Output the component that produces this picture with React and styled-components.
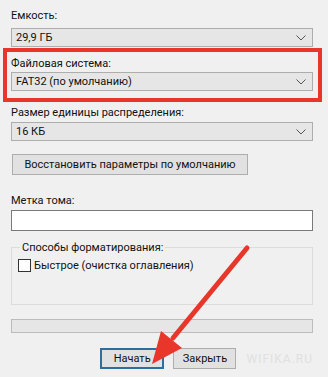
import React from "react";
import styled, { createGlobalStyle } from "styled-components";

const GlobalStyle = createGlobalStyle`
  html, body {
    margin: 0;
    padding: 0;
    background: #f0f0f0;
  }
  body {
    font-family: Roboto, "Noto Sans", sans-serif;
    font-size: 11px;
    color: #111;
  }
`;

const Dialog = styled.div`
  position: relative;
  width: 328px;
  height: 377px;
  box-sizing: border-box;
  padding: 8px 15px 0 11px;
  display: flex;
  flex-direction: column;
  overflow: hidden;
`;

const Label = styled.div`
  height: 15px;
  line-height: 15px;
  margin-top: ${(p) => p.$top || 0}px;
  margin-bottom: ${(p) => (p.$gap == null ? 5 : p.$gap)}px;
  white-space: nowrap;
`;

const Combo = styled.div`
  height: 19px;
  box-sizing: border-box;
  border: 1px solid #adadad;
  background: #e6e6e6;
  display: flex;
  align-items: center;
  justify-content: space-between;
  padding: 0 6px 0 4px;
  line-height: 17px;
`;

const Chevron = () => (
  <svg width="10" height="6" viewBox="0 0 10 6">
    <path d="M0.5 0.5 L5 5 L9.5 0.5" fill="none" stroke="#555" strokeWidth="1" />
  </svg>
);

const Highlight = styled.div`
  margin: 1px -9px 0 -8px;
  border: 4px solid #e8372a;
  padding: 4px 5px 7px 4px;
  display: flex;
  flex-direction: column;
`;

const Button = styled.div`
  height: 21px;
  box-sizing: border-box;
  border: ${(p) => (p.$primary ? "2px solid #2d6e9c" : "1px solid #adadad")};
  background: #e1e1e1;
  display: flex;
  align-items: center;
  justify-content: center;
  width: ${(p) => p.$width}px;
  white-space: nowrap;
`;

const ResetButton = styled(Button)`
  margin: 13px 0 0 1px;
`;

const TextBox = styled.div`
  height: 21px;
  box-sizing: border-box;
  border: 1px solid #7a7a7a;
  background: #ffffff;
`;

const GroupBox = styled.fieldset`
  margin: 9px 0 0 0;
  padding: 4px 0 0 6px;
  height: 65px;
  box-sizing: border-box;
  border: 1px solid #dcdcdc;
  border-radius: 0;
  min-inline-size: 0;
`;

const Legend = styled.legend`
  padding: 0 2px;
  margin-left: 2px;
  line-height: 15px;
`;

const CheckRow = styled.label`
  display: flex;
  align-items: center;
  gap: 3px;
`;

const CheckBox = styled.span`
  width: 13px;
  height: 13px;
  box-sizing: border-box;
  border: 1px solid #333;
  background: #fff;
`;

const Progress = styled.div`
  margin-top: 14px;
  height: 14px;
  box-sizing: border-box;
  border: 1px solid #bcbcbc;
  background: #e6e6e6;
`;

const Footer = styled.div`
  margin-top: 15px;
  display: flex;
  align-items: center;
  gap: 9px;
  padding-left: 89px;
`;

const Watermark = styled.span`
  color: #e0e0e0;
  font-size: 12px;
  letter-spacing: 1px;
  margin-left: 1px;
`;

const Arrow = styled.svg`
  position: absolute;
  left: 0;
  top: 0;
  pointer-events: none;
`;

export default function App() {
  return (
    <>
      <GlobalStyle />
      <Dialog>
        <Label>Емкость:</Label>
        <Combo>
          <span>29,9 ГБ</span>
          <Chevron />
        </Combo>
        <Highlight>
          <Label $gap={1}>Файловая система:</Label>
          <Combo>
            <span>FAT32 (по умолчанию)</span>
            <Chevron />
          </Combo>
        </Highlight>
        <Label $top={3} $gap={2}>Размер единицы распределения:</Label>
        <Combo>
          <span>16 КБ</span>
          <Chevron />
        </Combo>
        <ResetButton $width={236}>Восстановить параметры по умолчанию</ResetButton>
        <Label $top={18} $gap={2}>Метка тома:</Label>
        <TextBox />
        <GroupBox>
          <Legend>Способы форматирования:</Legend>
          <CheckRow>
            <CheckBox />
            Быстрое (очистка оглавления)
          </CheckRow>
        </GroupBox>
        <Progress />
        <Footer>
          <Button $primary $width={73}>Начать</Button>
          <Button $width={72}>Закрыть</Button>
          <Watermark>WIFIKA.RU</Watermark>
        </Footer>
        <Arrow width="328" height="377" viewBox="0 0 328 377">
          <line x1="247" y1="248" x2="173" y2="338" stroke="#e8372a" strokeWidth="5" strokeLinecap="round" />
          <polygon points="152,364 161,331 182,348" fill="#e8372a" />
        </Arrow>
      </Dialog>
    </>
  );
}
